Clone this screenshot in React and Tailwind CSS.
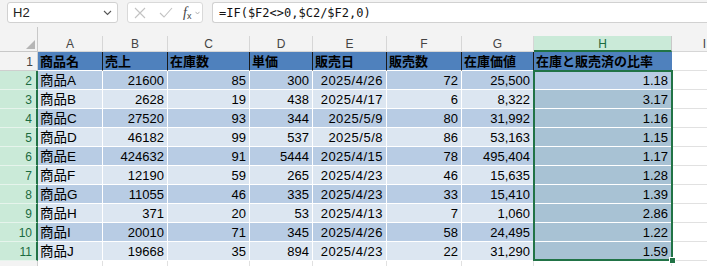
import React from "react";

const rows = [
  ["商品A", "21600", "85", "300", "2025/4/26", "72", "25,500", "1.18"],
  ["商品B", "2628", "19", "438", "2025/4/17", "6", "8,322", "3.17"],
  ["商品C", "27520", "93", "344", "2025/5/9", "80", "31,992", "1.16"],
  ["商品D", "46182", "99", "537", "2025/5/8", "86", "53,163", "1.15"],
  ["商品E", "424632", "91", "5444", "2025/4/15", "78", "495,404", "1.17"],
  ["商品F", "12190", "59", "265", "2025/4/23", "46", "15,635", "1.28"],
  ["商品G", "11055", "46", "335", "2025/4/23", "33", "15,410", "1.39"],
  ["商品H", "371", "20", "53", "2025/4/13", "7", "1,060", "2.86"],
  ["商品I", "20010", "71", "345", "2025/4/26", "58", "24,495", "1.22"],
  ["商品J", "19668", "35", "894", "2025/4/23", "22", "31,290", "1.59"],
];

const headers = ["商品名", "売上", "在庫数", "単価", "販売日", "販売数", "在庫価値", "在庫と販売済の比率"];
const letters = ["A", "B", "C", "D", "E", "F", "G", "H", "I"];

const FONT = { fontFamily: '"Liberation Sans", "Noto Sans CJK JP", sans-serif' };

export default function App() {
  return (
    <div className="w-[707px] h-[266px] overflow-hidden bg-white relative text-black" style={FONT}>
      {/* Top bar */}
      <div className="h-[27px] bg-[#f3f3f3] flex items-start pt-[2px]">
        <div className="ml-[7px] w-[111px] h-[21px] bg-white border border-[#d1d1d1] rounded-[3px] flex items-center justify-between pl-[5px] pr-[5px]">
          <span className="text-[13px] text-[#222]">H2</span>
          <svg width="9" height="6" viewBox="0 0 9 6" className="mt-[1px]">
            <path d="M1 1 L4.5 4.5 L8 1" fill="none" stroke="#555" strokeWidth="1.1" />
          </svg>
        </div>
        <div className="ml-[9px] w-[76px] h-[21px] bg-white border border-[#d9d9d9] rounded-[3px] flex items-center pl-[6px]">
          <svg width="12" height="12" viewBox="0 0 12 12">
            <path d="M1 1 L11 11 M11 1 L1 11" stroke="#c2c2c2" strokeWidth="1.1" fill="none" />
          </svg>
          <svg width="14" height="11" viewBox="0 0 14 11" className="ml-[13px]">
            <path d="M1 6 L5 10 L13 1" stroke="#c2c2c2" strokeWidth="1.1" fill="none" />
          </svg>
          <span className="ml-[10px] flex items-end leading-none text-[#444]" style={{ fontFamily: '"Liberation Serif", serif' }}>
            <span className="italic text-[14px]">f</span>
            <span className="text-[9px] mb-[-1px]" style={{ fontFamily: '"Liberation Sans", sans-serif' }}>x</span>
          </span>
          <svg width="5" height="4" viewBox="0 0 5 4" className="ml-[4px] mt-[1px]">
            <path d="M0.5 0.8 L2.5 3 L4.5 0.8" stroke="#aaa" strokeWidth="0.9" fill="none" />
          </svg>
        </div>
        <div className="ml-[9px] flex-1 h-[21px] bg-white border border-r-0 border-[#d1d1d1] rounded-l-[3px] flex items-center pl-[6px]">
          <span className="text-[12px] text-[#111]" style={{ fontFamily: '"DejaVu Sans Mono", "Liberation Mono", monospace' }}>
            =IF($F2&lt;&gt;0,$C2/$F2,0)
          </span>
        </div>
      </div>
      {/* gap */}
      <div className="h-[9px] bg-[#f3f3f3] flex">
        <div className="w-[38px] h-full border-r border-[#c8c8c8]" />
      </div>

      {/* Sheet */}
      <div className="relative">
        <div className="grid grid-cols-[38px_65px_65px_82px_63px_74px_75px_72px_138px_66px]">
          {/* column headers */}
          <div className="h-[16px] bg-[#f3f3f3] border-r border-b border-[#c8c8c8] relative">
            <svg width="38" height="16" viewBox="0 0 38 16" className="absolute left-0 top-0">
              <polygon points="35,4 35,13 26,13" fill="#b5b5b5" />
            </svg>
          </div>
          {letters.map((l) =>
            l === "H" ? (
              <div key={l} className="h-[16px] bg-[#caead8] border-b-2 border-[#217346] border-r border-r-[#c8c8c8] flex items-center justify-center text-[12px] text-[#1b6b3f] leading-none pt-[1px]">
                {l}
              </div>
            ) : (
              <div key={l} className="h-[16px] bg-[#f3f3f3] border-r border-b border-[#d6d6d6] flex items-center justify-center text-[12px] text-[#444] leading-none pt-[1px]">
                {l}
              </div>
            )
          )}

          {/* row 1 */}
          <div className="h-[19px] bg-[#f3f3f3] border-r border-b border-[#cfcfcf] flex items-end justify-end pr-[4px] text-[12px] text-[#444] leading-[16px]">
            1
          </div>
          {headers.map((h, i) => (
            <div
              key={h}
              className={
                "h-[19px] bg-[#4f81bd] border-b border-white flex items-end pl-[2px] text-[13px] font-bold leading-[16px] whitespace-nowrap overflow-hidden " +
                (i === 7 ? "border-r border-r-[#4f81bd]" : "border-r border-r-[#1a1a1a]")
              }
            >
              {h}
            </div>
          ))}
          <div className="h-[19px] bg-white border-r border-b border-[#e1e1e1]" />

          {/* data rows */}
          {rows.map((r, ri) => {
            const dark = ri % 2 === 0;
            const bg = dark ? "bg-[#b8cce4]" : "bg-[#dce6f1]";
            return (
              <React.Fragment key={ri}>
                <div className="h-[19px] bg-[#caead8] border-r-2 border-r-[#217346] border-b border-b-[#e6f4ec] flex items-end justify-end pr-[4px] text-[12px] text-[#1b6b3f] leading-[16px]">
                  {ri + 2}
                </div>
                {r.map((v, ci) => {
                  const isH = ci === 7;
                  const cellBg = isH ? (ri === 0 ? "bg-[#b8cce4]" : "bg-[#a8c2d4]") : bg;
                  const align = ci === 0 ? "justify-start pl-[2px]" : "justify-end pr-[3px]";
                  const size = ci === 0 ? "text-[13.5px]" : ci === 4 ? "text-[13px] tracking-[0.5px]" : "text-[13px]";
                  return (
                    <div
                      key={ci}
                      className={"h-[19px] border-r border-b border-white flex items-end leading-[16px] whitespace-nowrap " + cellBg + " " + align + " " + size}
                    >
                      {v}
                    </div>
                  );
                })}
                <div className="h-[19px] bg-white border-r border-b border-[#e1e1e1]" />
              </React.Fragment>
            );
          })}

          {/* row 12 partial */}
          <div className="h-[19px] bg-[#f3f3f3] border-r border-[#cfcfcf]" />
          {letters.map((l) => (
            <div key={"r12" + l} className="h-[19px] bg-white border-r border-[#e1e1e1]" />
          ))}
        </div>

        {/* selection overlay */}
        <div className="absolute left-[533px] top-[34px] w-[140px] h-[191px] border-2 border-[#217346] pointer-events-none" />
        <div className="absolute left-[669px] top-[221px] w-[7px] h-[7px] bg-[#217346] border border-white pointer-events-none" />
      </div>
    </div>
  );
}
